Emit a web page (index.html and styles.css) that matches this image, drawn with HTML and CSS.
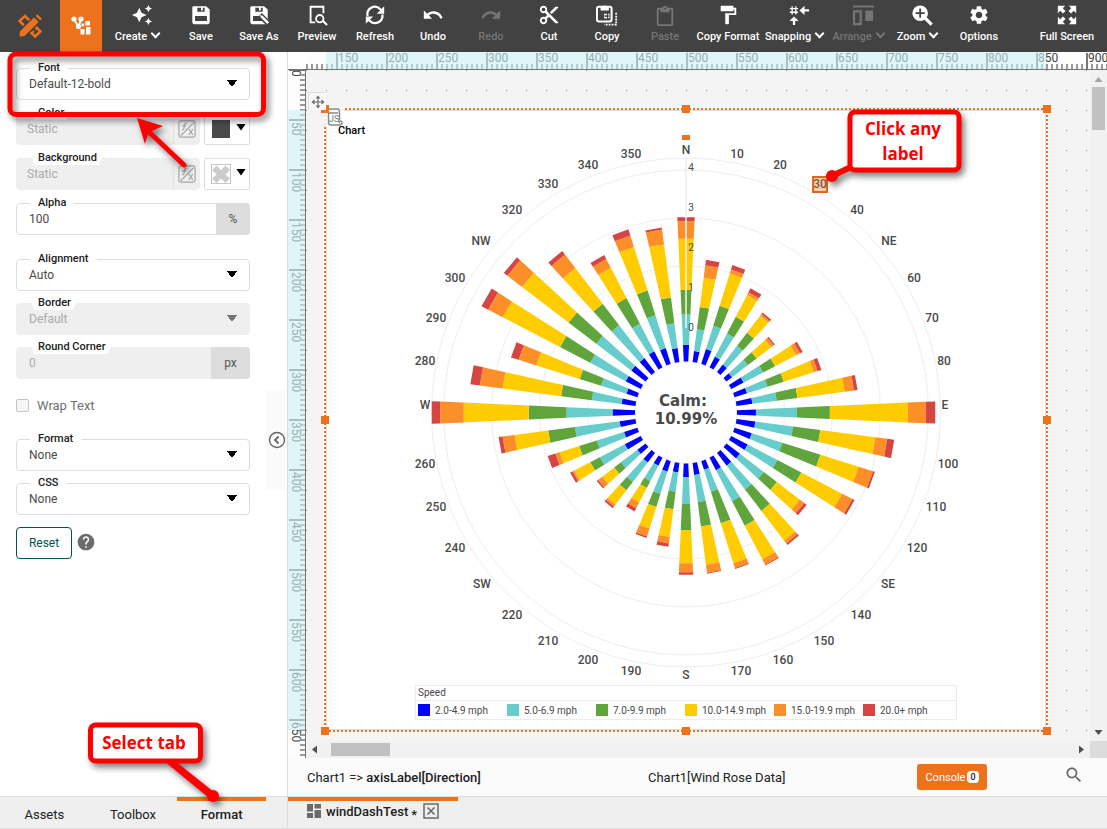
FILE: index.html
```html
<!DOCTYPE html>
<html lang="en">
<head>
<meta charset="utf-8">
<meta name="viewport" content="width=device-width, initial-scale=1">
<title>windDashTest</title>
<link rel="stylesheet" href="styles.css">
</head>
<body>
<header class="toolbar">
  <a class="brand" href="#" aria-label="Composer">
    <svg class="brand-icon" viewBox="0 0 24 24"><path d="M7 2l15.500 15.500-5.500 5L1.500 7z" fill="none" stroke="#ee711c" stroke-width="2.500"/><path d="M14 19l2-2M17.500 15.500l1.500-1.500" stroke="#ee711c" stroke-width="1.800"/><path d="M.5 23.500l.8-6.500L16 2.300 21.700 8 7 22.700z" fill="#ee711c" stroke="#424242" stroke-width="1.600"/><path d="M17.600 1.900L19.300.200l4.500 4.500-1.700 1.700z" fill="#ee711c"/></svg>
  </a>
  <button class="mode" aria-label="Dashboard">
    <svg class="mode-icon" viewBox="0 0 20 20" fill="#fff"><path d="M3 3l4.500 8M10 3L7.500 11" stroke="#fff" stroke-width="2"/><circle cx="3" cy="3" r="2.600"/><circle cx="10" cy="3" r="2.600"/><circle cx="7.500" cy="10.500" r="2.600"/><path d="M14.500 5H19v4.500h-4.500zM10.500 7.500h2.700v2.700h-2.700zM9.500 13h4v5.500h-4zM15 11h4.500v7.500H15z"/></svg>
  </button>
  <nav class="tools">
    <button class="tool tool-menu tool-first"><svg viewBox="0 0 24 24"><path d="M19 9l1.250-2.750L23 5l-2.750-1.250L19 1l-1.250 2.750L15 5l2.750 1.250L19 9zm-7.500.5L9 4 6.500 9.500 1 12l5.500 2.500L9 20l2.500-5.500L17 12l-5.500-2.500zM19 15l-1.250 2.750L15 19l2.750 1.250L19 23l1.250-2.750L23 19l-2.750-1.250L19 15z"/></svg><span>Create</span></button>
    <button class="tool"><svg viewBox="0 0 24 24"><path fill-rule="evenodd" d="M4 2.500h13.500L21.500 6v14a2 2 0 0 1-2 2h-15a2 2 0 0 1-2-2V4a1.500 1.500 0 0 1 1.500-1.500zM5.500 13v5.500h13V13zM8 4v4.500h8V4h-2v3h-2V4z"/></svg><span>Save</span></button>
    <button class="tool"><svg viewBox="0 0 24 24"><path fill-rule="evenodd" d="M4 2.500h13.500L21.500 6v14a2 2 0 0 1-2 2h-15a2 2 0 0 1-2-2V4a1.500 1.500 0 0 1 1.500-1.500zM5.500 13v5.500h13V13zM8 4v4.500h8V4h-2v3h-2V4z"/><path d="M13 12l10 10" stroke="#424242" stroke-width="6"/><path d="M13 12l3 .8 7 7-2 2-7-7z"/></svg><span>Save As</span></button>
    <button class="tool"><svg viewBox="0 0 24 24"><path d="M10 20H5V3h14v7" fill="none" stroke="currentColor" stroke-width="2"/><circle cx="15" cy="16" r="4" fill="none" stroke="currentColor" stroke-width="2"/><path d="M18 18l5 5" stroke="currentColor" stroke-width="2.200"/></svg><span>Preview</span></button>
    <button class="tool"><svg viewBox="0 0 24 24"><path d="M4 13a8 8 0 0 1 13.500-7.500L20 8M20 11.500A8 8 0 0 1 6.500 18.500L4 16" fill="none" stroke="currentColor" stroke-width="2.400"/><path d="M22 2.500v8h-8zM2 21.500v-8h8z"/></svg><span>Refresh</span></button>
    <button class="tool"><svg viewBox="0 0 24 24"><path d="M12.500 8c-2.650 0-5.050.99-6.900 2.600L2 7v9h9l-3.620-3.620c1.390-1.160 3.160-1.880 5.120-1.880 3.540 0 6.550 2.310 7.600 5.500l2.370-.78C21.080 11.030 17.150 8 12.500 8z"/></svg><span>Undo</span></button>
    <button class="tool" disabled><svg viewBox="0 0 24 24"><path d="M18.400 10.600C16.550 8.990 14.150 8 11.500 8c-4.650 0-8.580 3.030-9.960 7.220L3.900 16c1.050-3.190 4.050-5.500 7.600-5.500 1.950 0 3.730.72 5.120 1.880L13 16h9V7l-3.600 3.600z"/></svg><span>Redo</span></button>
    <button class="tool"><svg viewBox="0 0 24 24"><path d="M9.640 7.640c.23-.5.36-1.050.36-1.640 0-2.210-1.790-4-4-4S2 3.790 2 6s1.790 4 4 4c.59 0 1.140-.13 1.640-.36L10 12l-2.360 2.360C7.140 14.130 6.590 14 6 14c-2.210 0-4 1.790-4 4s1.790 4 4 4 4-1.790 4-4c0-.59-.13-1.140-.36-1.640L12 14l7 7h3v-1L9.640 7.640zM6 8c-1.100 0-2-.89-2-2s.9-2 2-2 2 .89 2 2-.9 2-2 2zm0 12c-1.100 0-2-.89-2-2s.9-2 2-2 2 .89 2 2-.9 2-2 2zm6-7.500c-.28 0-.5-.22-.5-.5s.22-.5.5-.5.5.22.5.5-.22.5-.5.5zM19 3l-6 6 2 2 7-7V3z"/></svg><span>Cut</span></button>
    <button class="tool"><svg viewBox="0 0 24 24"><rect x="1" y="3" width="16" height="16" rx="2" fill="none" stroke="currentColor" stroke-width="2.200"/><path d="M5 3h2a2.500 2.500 0 0 1 4.500 0H14v4H5z"/><path d="M10 11.500h3M10 15h3M9.500 10.500v6M14 10.500v6" stroke="currentColor" stroke-width="1.500" stroke-dasharray="2 1"/><path d="M22 9.500v13H9" fill="none" stroke="currentColor" stroke-width="2" stroke-dasharray="2 1.200"/></svg><span>Copy</span></button>
    <button class="tool" disabled><svg viewBox="0 0 24 24"><path d="M19 2h-4.180C14.400.84 13.300 0 12 0c-1.300 0-2.400.84-2.820 2H5c-1.100 0-2 .9-2 2v16c0 1.100.9 2 2 2h14c1.100 0 2-.9 2-2V4c0-1.100-.9-2-2-2zm-7 0c.55 0 1 .45 1 1s-.45 1-1 1-1-.45-1-1 .45-1 1-1zm7 18H5V4h2v3h10V4h2v16z" transform="translate(0 2)"/></svg><span>Paste</span></button>
    <button class="tool tool-wide"><svg viewBox="0 0 24 24"><path d="M18 4V3c0-.55-.45-1-1-1H5c-.55 0-1 .45-1 1v4c0 .55.45 1 1 1h12c.55 0 1-.45 1-1V6h1v4H9v11c0 .55.450 1 1 1h2c.55 0 1-.45 1-1v-9h8V4h-3z"/></svg><span>Copy Format</span></button>
    <button class="tool tool-menu tool-mid"><svg viewBox="0 0 24 24"><path d="M4.500 2.500v9M8.500 2.500v9M2 5h9M2 9h9" stroke="currentColor" stroke-width="1.400"/><path d="M12.500 7L18 2v3.800h5v2.400h-5V12zM6.500 13.500l5 5H7.800V23H5.300v-4.500H1.500z"/></svg><span>Snapping</span></button>
    <button class="tool tool-menu tool-mid" disabled><svg viewBox="0 0 24 24"><path d="M1 1.500h23v2.300H1zM14.500 7H23v11.500h-8.500z"/><path d="M2.200 8h7.300v14H2.200z" fill="none" stroke="currentColor" stroke-width="2.400"/></svg><span>Arrange</span></button>
    <button class="tool tool-menu tool-slim"><svg viewBox="0 0 24 24"><circle cx="10" cy="10" r="8.500"/><path d="M15.500 15.500l7 7" stroke="currentColor" stroke-width="3.500"/><path d="M10 5v10M5 10h10" stroke="#424242" stroke-width="2"/></svg><span>Zoom</span></button>
    <button class="tool tool-large"><svg viewBox="0 0 24 24"><path d="M19.140 12.940c.04-.3.06-.61.06-.94 0-.32-.02-.64-.07-.94l2.030-1.580c.18-.14.23-.41.12-.61l-1.920-3.320c-.12-.22-.37-.29-.59-.22l-2.390.96c-.5-.38-1.030-.7-1.620-.94l-.36-2.540c-.04-.24-.24-.41-.48-.41h-3.840c-.24 0-.43.17-.47.41l-.36 2.540c-.59.24-1.130.57-1.620.94l-2.390-.96c-.22-.08-.47 0-.59.22L2.740 8.870c-.12.21-.08.47.12.61l2.030 1.580c-.05.3-.09.63-.09.94s.02.64.07.94l-2.030 1.580c-.18.14-.23.41-.12.61l1.920 3.320c.12.22.37.29.59.22l2.390-.96c.5.38 1.030.7 1.620.94l.36 2.540c.05.24.24.41.48.41h3.840c.24 0 .44-.17.47-.41l.36-2.540c.59-.24 1.130-.56 1.620-.94l2.390.96c.22.08.47 0 .59-.22l1.920-3.320c.12-.22.07-.47-.12-.61l-2.010-1.580zM12 15.600c-1.980 0-3.600-1.620-3.600-3.600s1.620-3.600 3.600-3.600 3.600 1.620 3.600 3.600-1.620 3.600-3.600 3.600z"/></svg><span>Options</span></button>
  </nav>
  <button class="tool tool-large"><svg viewBox="0 0 24 24"><path d="M2 2h8L7.400 4.600l3 3-2.800 2.800-3-3L2 10zM22 2v8l-2.600-2.600-3 3-2.800-2.800 3-3L14 2zM2 22v-8l2.600 2.600 3-3 2.800 2.800-3 3L10 22zM22 22h-8l2.600-2.600-3-3 2.800-2.800 3 3L22 14z"/></svg><span>Full Screen</span></button>
</header>

<main class="workspace">
  <aside class="sidebar">
    <div class="panel">
      <form class="format-form">
        <div class="group">
          <div class="field"><label for="font">Font</label><select id="font"><option>Default-12-bold</option></select></div>
        </div>
        <div class="group">
          <div class="row">
            <div class="field disabled"><label for="color">Color</label><input id="color" class="snug" value="Static" disabled><span class="fx"><svg viewBox="0 0 20 20"><use href="#fx-icon"/></svg></span></div>
            <button type="button" class="swatch" aria-label="Pick color"><span class="chip"></span><span class="caret"></span></button>
          </div>
        </div>
        <div class="group">
          <div class="row">
            <div class="field disabled"><label for="background">Background</label><input id="background" class="snug" value="Static" disabled><span class="fx"><svg viewBox="0 0 20 20"><use href="#fx-icon"/></svg></span></div>
            <button type="button" class="swatch" aria-label="Pick background"><span class="chip chip-clear"><svg viewBox="0 0 18 18" fill="#c6c6c6"><path d="M0 5l4.500-4.500L9 5 4.500 9.500zM9 5L13.500.5 18 5l-4.500 4.500zM4.500 9.500L9 5l4.500 4.500L9 14zM0 13.500l4.500-4 4.500 4L4.500 18zM9 13.500l4.500-4 4.500 4-4.500 4.500z" fill-opacity=".9"/></svg></span><span class="caret"></span></button>
          </div>
        </div>
        <div class="group group-end">
          <div class="field"><label for="alpha">Alpha</label><input id="alpha" value="100"><span class="unit">%</span></div>
        </div>
        <div class="stack">
          <div class="field"><label for="alignment">Alignment</label><select id="alignment"><option>Auto</option></select></div>
          <div class="field disabled"><label for="border">Border</label><select id="border" disabled><option>Default</option></select></div>
          <div class="field disabled"><label for="round">Round Corner</label><input id="round" value="0" disabled><span class="unit unit-wide">px</span></div>
        </div>
        <div class="check"><input type="checkbox" id="wrap" disabled><label for="wrap">Wrap Text</label></div>
        <div class="stack">
          <div class="field"><label for="format">Format</label><select id="format"><option>None</option></select></div>
          <div class="field"><label for="css">CSS</label><select id="css"><option>None</option></select></div>
          <div class="actions"><button type="button" class="reset">Reset</button><a class="help" href="#" aria-label="Help"><svg viewBox="0 0 24 24" fill="#6b6b6b"><path d="M12 2C6.480 2 2 6.480 2 12s4.480 10 10 10 10-4.480 10-10S17.520 2 12 2zm1 17h-2v-2h2v2zm2.070-7.750l-.9.92C13.450 12.900 13 13.500 13 15h-2v-.5c0-1.100.45-2.100 1.170-2.830l1.240-1.260c.37-.36.59-.86.59-1.410 0-1.100-.9-2-2-2s-2 .9-2 2H8c0-2.210 1.790-4 4-4s4 1.790 4 4c0 .88-.36 1.680-.93 2.250z"/></svg></a></div>
        </div>
      </form>
      <button class="collapse" aria-label="Collapse panel"><svg viewBox="0 0 18 18" fill="none" stroke="#666"><circle cx="9" cy="9" r="7.500" stroke-width="1.400"/><path d="M10.500 5.500L7 9l3.500 3.500" stroke-width="1.800"/></svg></button>
      <svg class="note-font" viewBox="0 52 288 130">
        <g class="note-shadow">
          <rect x="10" y="54" width="253.500" height="60.500" rx="6" fill="none" stroke="#f00" stroke-width="5"/>
          <path d="M148 131L184 165" stroke="#f00" stroke-width="5" stroke-linecap="round"/>
          <path d="M137 118l26 8-11 5-4 3.500-3 9.500z" fill="#f00"/>
        </g>
      </svg>
    </div>
    <nav class="side-tabs">
      <a href="#">Assets</a><a href="#">Toolbox</a><a href="#" class="active">Format</a>
      <div class="note-tab">
        <svg viewBox="88 722 130 82"><g class="note-shadow"><rect x="90.500" y="725" width="110" height="36" rx="5" fill="#fff" stroke="#f00" stroke-width="5"/><path d="M164 761h11l39 31-5 6z" fill="#f00"/><circle cx="213" cy="796" r="6" fill="#f00"/></g></svg>
        <p>Select tab</p>
      </div>
    </nav>
  </aside>

  <section class="designer">
    <div class="surface">
      <div class="corner"></div>
      <div class="ruler ruler-x"><svg id="ruler-x"></svg></div>
      <div class="vbar"><span class="arrow up"></span><span class="thumb thumb-y"></span><span class="arrow down"></span></div>
      <div class="ruler ruler-y"><svg id="ruler-y"></svg></div>
      <div class="viewport">
        <svg class="grid-dots"><defs><pattern id="dots" width="20" height="20" patternUnits="userSpaceOnUse"><rect width="1" height="1" fill="#8c8c8c"/></pattern></defs><rect width="100%" height="100%" fill="url(#dots)"/></svg>
        <article class="chart">
          <svg id="plot" class="plot" viewBox="326 110 720 575"></svg>
          <div class="legend">
            <h3>Speed</h3>
            <ul>
              <li><i class="s1"></i>2.0-4.9 mph</li><li><i class="s2"></i>5.0-6.9 mph</li><li><i class="s3"></i>7.0-9.9 mph</li><li><i class="s4"></i>10.0-14.9 mph</li><li><i class="s5"></i>15.0-19.9 mph</li><li><i class="s6"></i>20.0+ mph</li>
            </ul>
          </div>
          <svg class="selection" viewBox="326 110 720 620">
            <rect x="325" y="109" width="722" height="622" fill="none" stroke="#fff" stroke-width="2"/>
            <rect x="325" y="109" width="722" height="622" fill="none" stroke="#ee711c" stroke-width="2" stroke-dasharray="2 2"/>
            <path d="M328 107h16v19h-16z" fill="#fff" opacity=".8"/>
            <path d="M324 113h3v14h-3z" fill="#fff" opacity=".8"/>
            <g fill="none" stroke="#8a8a8a" stroke-width="1.500"><path d="M329 113c-2 0-2.500-4 0-4h9c1.500 0 1.500 3 1.500 4v7M329 113h9M328.500 113v9.500c0 2 1 2.500 2.500 2.500h9c2.500 0 2.500-4 .5-4s-1.500 2-.5 2"/></g>
            <text x="329" y="122" class="script-mark">JS</text>
            <g fill="#ee711c"><path d="M321 105h8v8h-8zM682 105h8v8h-8zM1043 105h8v8h-8zM321 416h8v8h-8zM1043 416h8v8h-8zM321 727h8v8h-8zM682 727h8v8h-8zM1043 727h8v8h-8zM682 135h8v5h-8z"/></g>
          </svg>
          <button class="move" aria-label="Move"><svg viewBox="0 0 16 16" fill="none" stroke="#666" stroke-width="1.300"><path d="M8 1.500v13M1.500 8h13M6 4l2-2.500L10 4M6 12l2 2.500 2-2.500M4 6L1.500 8 4 10M12 6l2.500 2L12 10"/></svg></button>
          <div class="note-label">
            <svg viewBox="825 109 138 75"><g class="note-shadow"><rect x="850" y="112" width="109" height="58" rx="5" fill="#fff" stroke="#f00" stroke-width="5"/><path d="M832 176l18-8.500" stroke="#f00" stroke-width="6"/><circle cx="832" cy="176" r="6" fill="#f00"/></g></svg>
            <p>Click any<br>label</p>
          </div>
        </article>
      </div>
      <div class="hbar"><span class="arrow left"></span><span class="thumb thumb-x"></span><span class="arrow right"></span></div>
      <div class="bar-corner"></div>
    </div>
    <div class="status">
      <p class="path">Chart1 =&gt; <b>axisLabel[Direction]</b></p>
      <p class="source">Chart1[Wind Rose Data]</p>
      <button class="console">Console <span>0</span></button>
      <button class="search" aria-label="Search"><svg viewBox="0 0 24 24" fill="#666"><path d="M15.500 14h-.79l-.28-.27C15.410 12.590 16 11.110 16 9.500 16 5.910 13.090 3 9.500 3S3 5.910 3 9.500 5.910 16 9.500 16c1.610 0 3.090-.59 4.230-1.570l.27.28v.79l5 4.990L20.490 19l-4.990-5zm-6 0C7.010 14 5 11.990 5 9.500S7.010 5 9.500 5 14 7.010 14 9.500 11.990 14 9.500 14z"/></svg></button>
    </div>
    <nav class="doc-tabs">
      <div class="doc-tab">
        <svg class="doc-icon" viewBox="0 0 14 14" fill="#6b6b6b"><path d="M0 0h6v7.500H0zM7.500 0H14v4.500H7.500zM0 9h6v5H0zM7.500 6H14v8H7.500z"/></svg>
        <a href="#">windDashTest</a><span class="dirty">*</span>
        <button class="close" aria-label="Close tab"><svg viewBox="0 0 16 16" fill="none" stroke="#6b6b6b"><rect x="1" y="1" width="14" height="14" stroke-width="1.500"/><path d="M4.500 4.500l7 7M11.500 4.500l-7 7" stroke-width="1.700"/></svg></button>
      </div>
    </nav>
  </section>
</main>

<svg class="defs"><defs><g id="fx-icon" fill="none" stroke="#a8a8a8" stroke-width="1.300"><rect x="1" y="1" width="18" height="18" rx="2"/><path d="M3 17.500L17.500 3M10 3.500c-2-.5-2.500 1-2.700 2.500L6.500 9.500c-.3 1-.8 1.500-2 1.200M4.500 6.500h4.500M12 10l4.500 6.500M16.500 10L12 16.500"/></g></defs></svg>
<script src="chart.js"></script>
</body>
</html>
```

FILE: styles.css
```css
* { box-sizing: border-box; }
body, p, h3, ul { margin: 0; padding: 0; }
body {
  display: flex;
  flex-direction: column;
  height: 100vh;
  overflow: hidden;
  font-family: Roboto, "Liberation Sans", sans-serif;
  font-size: 12px;
  color: #212121;
  background: #fff;
}
button, input, select { font: inherit; color: inherit; margin: 0; }
button { border: 0; background: none; padding: 0; cursor: pointer; }
a { color: inherit; text-decoration: none; }
svg { display: block; }
.defs { position: absolute; width: 0; height: 0; }

/* toolbar */
.toolbar { display: flex; flex: none; height: 52px; padding-right: 5px; background: #424242; color: #fff; }
.brand { display: flex; width: 60px; align-items: center; justify-content: center; }
.brand-icon { width: 24px; height: 24px; }
.mode { display: flex; width: 42px; align-items: center; justify-content: center; background: #ee711c; }
.mode-icon { width: 20px; height: 20px; }
.tools { display: flex; flex: 1; }
.tool {
  display: flex;
  flex-direction: column;
  align-items: center;
  flex: none;
  width: 58px;
  padding-top: 4px;
  gap: 4px;
  font-size: 11px;
  font-weight: 500;
  line-height: 14px;
  white-space: nowrap;
}
.tool svg { width: 22px; height: 22px; fill: currentColor; }
.tool:disabled { color: #757575; }
.tool-first { width: 70px; }
.tool-wide { width: 68px; }
.tool-mid { width: 64px; }
.tool-slim { width: 54px; }
.tool-large { width: 70px; }
.tool-menu svg { margin-left: 10px; }
.tool-menu span::after {
  content: "";
  display: inline-block;
  width: 5px;
  height: 5px;
  margin: 0 0 3px 5px;
  border: solid currentColor;
  border-width: 0 2px 2px 0;
  transform: rotate(45deg);
}

/* frame */
.workspace { display: grid; grid-template-columns: 288px minmax(0, 1fr); flex: 1; min-height: 0; }
.sidebar { display: flex; flex-direction: column; min-height: 0; border-right: 1px solid #ddd; }
.panel { position: relative; display: flex; flex: 1; align-items: center; min-height: 0; }
.format-form { align-self: flex-start; width: 266px; padding: 16px 16px 0; }
.collapse {
  display: flex;
  flex: 1;
  height: 100px;
  margin-top: 32px;
  align-items: center;
  justify-content: center;
  background: #fafafa;
}
.collapse svg { width: 18px; height: 18px; }

/* form */
.group { margin-bottom: 13px; }
.group-end { margin-bottom: 24px; }
.stack { display: flex; flex-direction: column; gap: 12px; }
.row { display: flex; gap: 4px; }
.row .field { flex: 1; }
.field {
  position: relative;
  display: flex;
  height: 32px;
  border: 1px solid #ddd;
  border-radius: 4px;
  background: #fff;
  color: #4a4a4a;
}
.field label {
  position: absolute;
  top: -8px;
  left: 13px;
  padding: 0 8px;
  font-size: 11px;
  font-weight: 500;
  line-height: 14px;
  color: #212121;
  background: #fff;
}
.field.disabled { border-color: #efefef; background: #efefef; color: #aaa; }
.field.disabled label { clip-path: polygon(0 0, 100% 0, calc(100% - 6px) 100%, 4px 100%); }
.field input, .field select {
  flex: 1;
  width: 100%;
  min-width: 0;
  padding: 0 12px;
  border: 0;
  outline: 0;
  background: transparent;
  appearance: none;
  opacity: 1;
}
.field .snug { padding: 0 10px; }
.field select {
  background: linear-gradient(to bottom right, #000 50%, transparent 51%) calc(100% - 12px) 11px / 5px 7px no-repeat,
              linear-gradient(to bottom left, #000 50%, transparent 51%) calc(100% - 17px) 11px / 5px 7px no-repeat;
}
.field.disabled select {
  background-image: linear-gradient(to bottom right, #757575 50%, transparent 51%), linear-gradient(to bottom left, #757575 50%, transparent 51%);
}
.unit { display: flex; flex: none; width: 34px; margin: -1px -1px -1px 0; align-items: center; justify-content: center; border-radius: 0 4px 4px 0; background: #ddd; color: #555; }
.unit-wide { width: 39px; }
.fx { display: flex; flex: none; width: 26px; align-items: center; justify-content: center; border-left: 1px solid #e2e2e2; }
.fx svg { width: 18px; height: 18px; }
.swatch { display: flex; width: 46px; height: 32px; padding-left: 7px; gap: 6px; align-items: center; border: 1px solid #ddd; border-radius: 2px; }
.chip { width: 18px; height: 18px; background: #4a4a4a; }
.chip-clear { background: #fff; outline: 1px solid #c6c6c6; }
.caret { width: 10px; height: 7px; margin-bottom: 4px; background: #000; clip-path: polygon(0 0, 100% 0, 50% 100%); }
.check { display: flex; height: 16px; margin: 18px 0 26px; gap: 8px; align-items: center; font-size: 13px; color: #707070; }
.check input { appearance: none; width: 13px; height: 13px; border: 1px solid #c4c4c4; border-radius: 2px; background: #f6f6f6; }
.actions { display: flex; gap: 4px; }
.reset { width: 56px; height: 32px; border: 1px solid #00564f; border-radius: 4px; color: #00564f; }
.help { align-self: center; margin-bottom: 2px; }
.help svg { width: 20px; height: 20px; }

/* side tabs */
.side-tabs { position: relative; display: flex; flex: none; height: 33px; padding-right: 21px; background: #efefef; border-top: 1px solid #ddd; border-bottom: 1px solid #ddd; font-size: 13px; }
.side-tabs a { display: flex; flex: 1; align-items: center; justify-content: center; border-top: 4px solid transparent; line-height: 20px; }
.side-tabs .active { border-color: #ee711c; font-weight: 500; }

/* callouts */
.note-shadow { filter: drop-shadow(3px 4px 3px rgba(0, 0, 0, .5)); }
.note-font { position: absolute; top: 0; left: 0; width: 288px; height: 130px; overflow: visible; pointer-events: none; }
.note-tab, .note-label { position: absolute; pointer-events: none; color: #f00; font-family: "Open Sans", sans-serif; font-size: 17px; font-weight: 700; line-height: 25px; text-align: center; }
.note-tab svg, .note-label svg { position: absolute; inset: 0; width: 100%; height: 100%; overflow: visible; }
.note-tab p, .note-label p { position: relative; }
.note-tab { left: 88px; bottom: 24px; width: 130px; height: 82px; }
.note-tab p { width: 112px; padding-top: 8px; }
.note-label { left: 499px; top: -1px; width: 138px; height: 75px; }
.note-label p { padding: 7px 0 0 18px; }

/* designer */
.designer { display: flex; flex-direction: column; min-width: 0; min-height: 0; }
.surface { display: grid; flex: 1; min-height: 0; grid-template: 18px minmax(0, 1fr) 17px / 18px minmax(0, 1fr) 17px; }
.corner { background: #fff; border-bottom: 1px solid #757575; }
.ruler { position: relative; overflow: hidden; background: #fdfdfd; }
.ruler svg { width: 100%; height: 100%; }
.ruler text { font-size: 12px; fill: #444; }
.ruler-x { grid-column: 2 / 4; border-bottom: 1px solid #757575; }
.ruler-y { grid-row: 2 / 4; grid-column: 1; border-right: 1px solid #757575; }
.vbar { grid-column: 3; grid-row: 2; display: flex; flex-direction: column; align-items: center; background: #f1f1f1; }
.hbar { grid-column: 2; grid-row: 3; display: flex; align-items: center; background: #f1f1f1; }
.bar-corner { background: #dcdcdc; }
.thumb { background: #c1c1c1; }
.thumb-y { width: 13px; height: 43px; }
.thumb-x { width: 59px; height: 13px; margin-left: 8px; }
.arrow { flex: none; width: 8px; height: 5px; background: #505050; }
.up { margin: 7px 0 5px; background: #a3a3a3; clip-path: polygon(50% 0, 100% 100%, 0 100%); }
.down { margin: auto 0 6px; clip-path: polygon(0 0, 100% 0, 50% 100%); }
.left, .right { width: 5px; height: 8px; }
.left { margin: 0 6px; clip-path: polygon(0 50%, 100% 0, 100% 100%); }
.right { margin: 0 6px 0 auto; clip-path: polygon(100% 50%, 0 0, 0 100%); }
.viewport { grid-column: 2; grid-row: 2; position: relative; overflow: hidden; background: #f4f4f4; }
.grid-dots { position: absolute; inset: 0; width: 100%; height: 100%; }

/* chart */
.chart { position: absolute; left: 20px; top: 40px; width: 720px; height: 620px; background: #fff; box-shadow: inset 0 0 0 1px #ddd; }
.plot { width: 720px; height: 575px; overflow: visible; }
.plot text { text-anchor: middle; fill: #4a4a4a; }
.plot .direction { font-size: 12px; font-weight: 500; }
.plot .tick { font-size: 10px; }
.plot .calm { font-family: "DejaVu Sans", sans-serif; font-size: 15px; font-weight: 700; }
.plot .title { font-size: 11px; font-weight: 500; fill: #000; text-anchor: start; }
.selection { position: absolute; inset: 0; width: 720px; height: 620px; overflow: visible; pointer-events: none; }
.script-mark { font-size: 9px; fill: #777; }
.move { position: absolute; left: -18px; top: -18px; display: flex; width: 18px; height: 18px; align-items: center; justify-content: center; border: 1px solid #ddd; border-right: 0; border-bottom: 0; background: #f8f8f8; }
.move svg { width: 14px; height: 14px; }
.legend { width: 542px; margin: 0 auto; border: 1px solid #ececec; font-size: 10px; color: #4a4a4a; background: #fff; }
.legend h3 { height: 15px; padding-left: 2px; border-bottom: 1px solid #ececec; font-size: 10px; font-weight: 400; line-height: 14px; }
.legend ul { display: flex; height: 18px; padding-left: 2px; list-style: none; }
.legend li { display: flex; width: 89px; gap: 5px; align-items: center; white-space: nowrap; }
.legend i { flex: none; width: 12px; height: 12px; }
.s1 { background: #0000ff; fill: #0000ff; }
.s2 { background: #66cdcc; fill: #66cdcc; }
.s3 { background: #5fa53c; fill: #5fa53c; }
.s4 { background: #ffcc00; fill: #ffcc00; }
.s5 { background: #fd8f28; fill: #fd8f28; }
.s6 { background: #d64541; fill: #d64541; }

/* status and document tabs */
.status { display: flex; flex: none; height: 38px; padding: 0 23px 0 19px; align-items: center; background: #fbfbfb; font-size: 13px; }
.status b { font-weight: 500; }
.path { flex: 341 1 0; }
.source { flex: 269 1 0; }
.console { display: flex; flex: none; width: 70px; height: 26px; align-items: center; justify-content: center; gap: 2px; border-radius: 3px; background: #ee711c; color: #fff; font-size: 11px; }
.console span { padding: 0 3px; border-radius: 4px; background: #fff; color: #212121; font-size: 9px; font-weight: 500; line-height: 12px; }
.search { flex: none; margin: 0 0 4px 77px; }
.search svg { width: 20px; height: 20px; }
.doc-tabs { display: flex; flex: none; height: 33px; background: #efefef; border-top: 1px solid #ddd; border-bottom: 1px solid #ddd; font-size: 13px; font-weight: 500; }
.doc-tab { display: flex; width: 170px; padding: 0 19px 7px; align-items: center; border-top: 4px solid #ee711c; }
.doc-icon { width: 14px; height: 14px; margin-right: 5px; }
.dirty { margin: 8px 6px 0 3px; line-height: 12px; }
.close svg { width: 16px; height: 16px; }
```

FILE: chart.js
```js
const NS = "http://www.w3.org/2000/svg";

function add(parent, name, attrs, text) {
  const node = document.createElementNS(NS, name);
  for (const key in attrs) node.setAttribute(key, attrs[key]);
  if (text !== undefined) node.textContent = text;
  parent.appendChild(node);
  return node;
}

/* Rulers: ticks every 5 units, labels every 50, tinted over the selected span. */
function drawRuler(id, horizontal, origin, tintStart, tintLength) {
  const svg = document.getElementById(id);
  const extent = horizontal ? svg.clientWidth : svg.clientHeight;
  svg.replaceChildren();
  const first = Math.ceil(-origin / 50) * 50 - 50;
  for (let unit = Math.max(first, 0); origin + unit < extent; unit += 5) {
    const at = origin + unit;
    const major = unit % 50 === 0;
    const from = major ? 1 : 12;
    const box = horizontal
      ? { x: at, y: from, width: 2, height: 18 - from }
      : { x: from, y: at - 1, width: 18 - from, height: 2 };
    add(svg, "rect", Object.assign(box, { fill: major ? "#777" : "#999" }));
    if (major && at > -10) {
      const place = horizontal
        ? { x: at + 2, y: 10 }
        : { transform: `translate(4 ${at + (unit === 0 ? 0 : 2)}) rotate(90)` };
      add(svg, "text", place, unit);
    }
  }
  const tint = horizontal
    ? { x: tintStart, y: 0, width: tintLength, height: 18 }
    : { x: 0, y: tintStart, width: 18, height: tintLength };
  add(svg, "rect", Object.assign(tint, { fill: "#cbf2f7", "fill-opacity": 0.6 }));
}
function drawRulers() {
  drawRuler("ruler-x", true, -120, 20, 720);
  drawRuler("ruler-y", false, 0, 40, 620);
}
drawRulers();
window.addEventListener("resize", drawRulers);

/* Wind rose: outer radius of each speed band, one row per 10 degrees. */
const rose = [
  [67.5, 98, 122.5, 174, 191.5, 195.5], [62, 84, 106.5, 136, 148.5, 154],
  [66.5, 91, 112, 146, 150, 154.5], [63, 89, 108, 132.5, 135.5, 140],
  [60.5, 84, 100.5, 122, 124, 126], [58, 78, 89, 107.5, 110.5, 112],
  [65, 87, 100.5, 124, 128.5, 131.5], [64, 85.5, 102.5, 134, 138, 142],
  [67, 91.5, 112.5, 160, 169.5, 173], [70, 111, 144, 222, 240, 249.5],
  [70, 108, 135.5, 191, 203, 210], [69, 101, 141, 181, 196, 198],
  [69.5, 103, 130, 176, 187.5, 190], [68, 98, 114.5, 143.5, 149, 152],
  [67, 97, 124, 161.5, 165, 167], [65, 100, 127.5, 165.5, 171.5, 172.5],
  [60, 83, 116, 158, 163, 164], [63, 90.5, 115, 153.5, 161.5, 162.5],
  [64.5, 91, 117.5, 151, 160, 162.5], [60.5, 80, 97.5, 125.5, 132, 135.5],
  [62, 85.5, 99, 121.5, 130, 131.5], [60, 77.5, 85, 101.5, 108, 111.5],
  [63, 87.5, 98, 116, 118.5, 120.5], [61.5, 82, 90.5, 105.5, 111, 112.5],
  [69, 97, 108, 126, 128, 130.5], [65, 93.5, 112, 132.5, 137, 145],
  [67, 112, 139, 173, 185, 189], [73.5, 119.5, 157.5, 222.5, 246, 254.5],
  [65, 95, 126, 185, 208, 217.5], [62.5, 89, 111.5, 157, 175.5, 183.5],
  [68, 108, 142, 206.5, 223, 230.5], [69, 113, 148, 206.5, 225, 229.5],
  [68.5, 110, 137, 182, 199, 203.5], [69, 100, 129, 163, 173, 177.5],
  [67.5, 102, 128, 173.5, 185.5, 192], [65, 90, 116, 169.5, 184.5, 186.5]
];
const directions = [
  ["N", 686, 150], ["10", 737, 154], ["20", 780, 165], ["30", 820, 184], ["40", 857, 210], ["NE", 889, 241],
  ["60", 914, 278], ["70", 932, 318], ["80", 944, 361], ["E", 945, 405], ["100", 948, 464], ["110", 936, 507],
  ["120", 917, 548], ["SE", 888, 584], ["140", 861, 615], ["150", 824, 641], ["160", 783, 660], ["170", 741, 671],
  ["S", 686, 675], ["190", 631, 671], ["200", 588, 660], ["210", 548, 641], ["220", 512, 615], ["SW", 482, 584],
  ["240", 455, 548], ["250", 436, 507], ["260", 425, 464], ["W", 425, 405], ["280", 425, 361], ["290", 436, 318],
  ["300", 455, 278], ["NW", 481, 241], ["320", 512, 210], ["330", 548, 184], ["340", 588, 165], ["350", 631, 154]
];
const plot = document.getElementById("plot");
const cx = 686, cy = 412.5, hub = 51, half = 2.55;

function point(radius, degrees) {
  const a = degrees * Math.PI / 180;
  return `${(cx + radius * Math.sin(a)).toFixed(2)},${(cy - radius * Math.cos(a)).toFixed(2)}`;
}

[hub, 98.5, 146.5, 194.5, 242.5, 254.5].forEach(r =>
  add(plot, "circle", { cx, cy, r, fill: "none", stroke: "#eee" }));

rose.forEach((bands, i) => {
  let inner = hub;
  bands.forEach((outer, band) => {
    const a = i * 10 - half, b = i * 10 + half;
    add(plot, "polygon", {
      class: "s" + (band + 1),
      points: [point(inner, a), point(outer, a), point(outer, b), point(inner, b)].join(" ")
    });
    inner = outer;
  });
});

add(plot, "rect", { x: 685, y: 158, width: 2, height: 170, fill: "#eee", "fill-opacity": 0.8 });
[4, 3, 2, 1, 0].forEach((value, i) =>
  add(plot, "text", { class: "tick", x: 691, y: 171 + i * 40 }, value));
directions.forEach(([name, x, y]) =>
  add(plot, "text", { class: "direction", x, y: y + 4 }, name));
add(plot, "rect", { x: 813, y: 177, width: 14, height: 15, fill: "#ee711c", "fill-opacity": 0.35, stroke: "#e0661b", "stroke-width": 2 });
add(plot, "text", { class: "calm", x: 683, y: 406 }, "Calm:");
add(plot, "text", { class: "calm", x: 686, y: 424 }, "10.99%");
add(plot, "text", { class: "title", x: 338, y: 134 }, "Chart");
```
